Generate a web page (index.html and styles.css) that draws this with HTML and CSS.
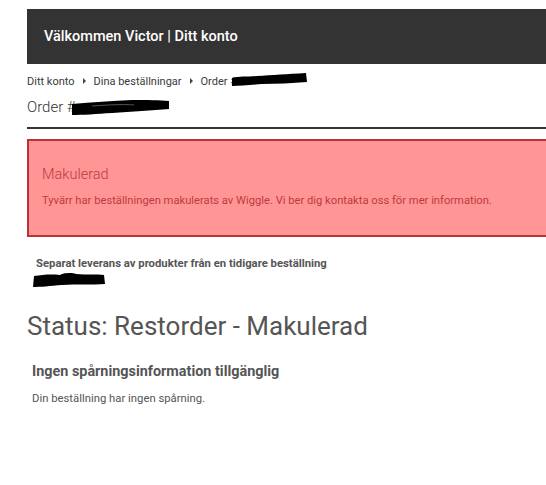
FILE: index.html
```html
<!DOCTYPE html>
<html>
<head>
<meta charset="utf-8">
<link rel="stylesheet" href="styles.css">
</head>
<body>
<div class="page">
  <header class="topbar">Välkommen Victor | Ditt konto</header>
  <nav class="crumbs">
    <span>Ditt konto</span><span class="tri"></span>
    <span>Dina beställningar</span><span class="tri"></span>
    <span>Order #</span>
    <svg class="redact r1" width="76" height="14" viewBox="0 0 76 14"><path d="M0 5 C8 3 15 4 25 3 C40 2 55 1 74 0 L75 9 C60 10 45 11 30 11 C18 12 8 13 0 13 Z" fill="#000"/></svg>
  </nav>
  <h1 class="order">Order #
    <svg class="redact r2" width="98" height="15" viewBox="0 0 98 15"><path d="M0 4 C20 2 40 1 60 0 C75 0 88 0 97 1 L97 9 C80 10 60 12 40 13 C25 14 10 15 0 15 Z" fill="#000"/><path d="M20 6 C35 5 50 4 62 5" stroke="#555" stroke-width="1" fill="none"/></svg>
  </h1>
  <div class="alert">
    <div class="alert-title">Makulerad</div>
    <p class="alert-text">Tyvärr har beställningen makulerats av Wiggle. Vi ber dig kontakta oss för mer information.</p>
  </div>
  <div class="sep">
    <div class="sep-title">Separat leverans av produkter från en tidigare beställning</div>
    <svg class="redact r3" width="74" height="16" viewBox="0 0 74 16"><path d="M2 4 C10 3 18 2 28 3 C30 1 40 0 44 2 C55 3 65 2 72 3 L73 12 C60 13 45 12 30 13 C18 14 8 15 1 15 Z" fill="#000"/></svg>
  </div>
  <h2 class="status">Status: Restorder - Makulerad</h2>
  <section class="tracking">
    <h3 class="track-title">Ingen spårningsinformation tillgänglig</h3>
    <p class="track-text">Din beställning har ingen spårning.</p>
  </section>
</div>
</body>
</html>
```
FILE: styles.css
```css
html, body { margin: 0; padding: 0; background: #fff; }
body { font-family: Roboto, "Open Sans", sans-serif; color: #444; }
.page { padding: 9px 0 0 27px; }
.topbar {
  background: #333333;
  color: #fff;
  font-family: Roboto, sans-serif;
  font-weight: 500;
  font-size: 14.5px;
  height: 55px;
  line-height: 55px;
  padding-left: 17px;
}
.crumbs {
  display: flex;
  align-items: center;
  font-size: 11px;
  color: #3a3a3a;
  height: 16px;
  margin-top: 9px;
}
.tri {
  width: 0; height: 0;
  border-left: 3px solid #444;
  border-top: 3px solid transparent;
  border-bottom: 3px solid transparent;
  margin: 0 8px 0 8px;
}
.redact { display: block; }
.r1 { margin-left: -5px; margin-top: -3px; }
.order {
  display: flex;
  align-items: center;
  margin: 0;
  font-family: Roboto, sans-serif;
  font-weight: 300;
  font-size: 15px;
  color: #333;
  height: 26px;
  padding-top: 5px;
  border-bottom: 2px solid #333;
  padding-bottom: 7px;
}
.r2 { margin-left: -4px; margin-top: 0; }
.alert {
  margin-top: 10px;
  background: #ff9595;
  border: 2px solid #b9333a;
  border-right: none;
  height: 98px;
  box-sizing: border-box;
  padding: 25px 0 0 13px;
  color: #c0393f;
}
.alert-title { font-size: 14.5px; font-weight: 300; line-height: 18px; }
.alert-text { margin: 10px 0 0; font-size: 11.2px; line-height: 14px; }
.sep { margin-top: 20px; padding-left: 9px; }
.sep-title { font-size: 11.3px; font-weight: 700; color: #555; line-height: 14px; }
.r3 { margin-left: -4px; margin-top: 1px; }
.status {
  margin: 23px 0 0;
  font-size: 26px;
  font-weight: 400;
  color: #555;
  line-height: 30px;
}
.tracking { padding-left: 5px; margin-top: 22px; }
.track-title { margin: 0; font-size: 14.4px; font-weight: 700; color: #555; line-height: 18px; }
.track-text { margin: 11px 0 0; font-size: 11.3px; color: #555; line-height: 14px; }
```
